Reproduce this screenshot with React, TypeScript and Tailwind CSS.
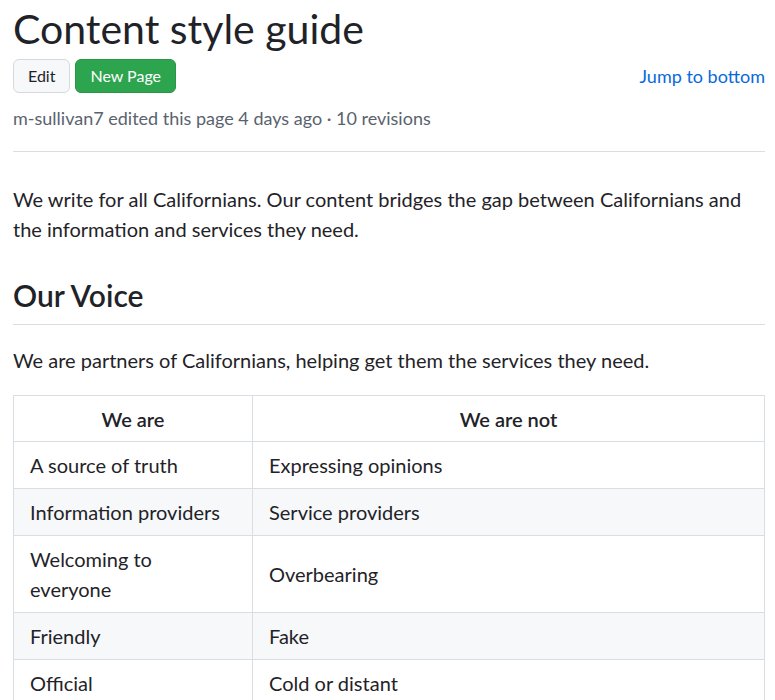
import React from 'react'

const rows: [string, string][] = [
  ['A source of truth', 'Expressing opinions'],
  ['Information providers', 'Service providers'],
  ['Welcoming to everyone', 'Overbearing'],
  ['Friendly', 'Fake'],
  ['Official', 'Cold or distant'],
]

function App() {
  return (
    <div className="min-h-screen bg-white pl-[13px] pr-[10px] text-[#1f2328] font-['Lato','Noto_Sans',sans-serif]">
      <h1 className="pt-[4px] text-[41px] leading-[50px] font-normal">Content style guide</h1>
      <div className="mt-[5px] flex items-center justify-between">
        <div className="flex gap-[5px]">
          <button className="h-[34px] rounded-[6px] border border-[#d5d9de] bg-[#f6f8fa] px-[14px] text-[16px]">
            Edit
          </button>
          <button className="h-[34px] rounded-[6px] border border-[#2a9447] bg-[#2da44e] px-[14px] text-[16px] text-white">
            New Page
          </button>
        </div>
        <a className="text-[18px] text-[#0969da]">Jump to bottom</a>
      </div>
      <p className="mt-[12px] text-[18px] leading-[26px] text-[#59636e]">
        m-sullivan7 edited this page 4 days ago · 10 revisions
      </p>
      <div className="mt-[20px] border-b border-[#d8dee4]" />
      <p className="mt-[32px] text-[20px] leading-[30px]">
        We write for all Californians. Our content bridges the gap between Californians and
        the information and services they need.
      </p>
      <h2 className="mt-[32px] border-b border-[#d8dee4] pb-[10px] text-[30px] leading-[38px] font-semibold">
        Our Voice
      </h2>
      <p className="mt-[20px] text-[20px] leading-[30px]">
        We are partners of Californians, helping get them the services they need.
      </p>
      <table className="mt-[20px] w-full border-collapse text-[20px] leading-[30px]">
        <thead>
          <tr>
            <th className="w-[239px] border border-[#d8dee4] px-[16px] py-[7.5px] font-semibold">We are</th>
            <th className="border border-[#d8dee4] px-[16px] py-[7.5px] font-semibold">We are not</th>
          </tr>
        </thead>
        <tbody>
          {rows.map(([a, b], i) => (
            <tr key={a} className={i % 2 === 1 ? 'bg-[#f6f8fa]' : 'bg-white'}>
              <td className="border border-[#d8dee4] px-[16px] py-[8px]">{a}</td>
              <td className="border border-[#d8dee4] px-[16px] py-[8px]">{b}</td>
            </tr>
          ))}
        </tbody>
      </table>
    </div>
  )
}

export default App
